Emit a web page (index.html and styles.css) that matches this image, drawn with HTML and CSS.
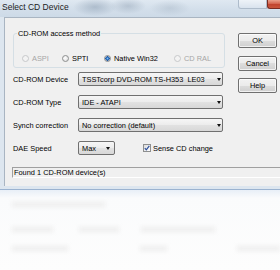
FILE: index.html
```html
<!DOCTYPE html>
<html>
<head>
<meta charset="utf-8">
<link rel="stylesheet" href="styles.css">
</head>
<body>
<div class="window">
  <div class="titlebar">
    <span class="title">Select CD Device</span>
    <span class="tb-minmax"></span>
    <span class="tb-close"></span>
  </div>
  <div class="frame">
    <div class="client">
      <div class="main">
        <fieldset class="group">
          <legend>CD-ROM access method</legend>
          <div class="radios">
            <label class="radio disabled r-aspi"><span class="dot"></span>ASPI</label>
            <label class="radio r-spti"><span class="dot"></span>SPTI</label>
            <label class="radio checked r-native"><span class="dot"></span>Native Win32</label>
            <label class="radio disabled r-ral"><span class="dot"></span>CD RAL</label>
          </div>
        </fieldset>
        <div class="row first">
          <span class="lbl">CD-ROM Device</span>
          <div class="combo"><span class="val">TSSTcorp DVD-ROM TS-H353&nbsp;&nbsp;LE03</span><i class="arrow"></i></div>
        </div>
        <div class="row">
          <span class="lbl">CD-ROM Type</span>
          <div class="combo"><span class="val">IDE - ATAPI</span><i class="arrow"></i></div>
        </div>
        <div class="row">
          <span class="lbl">Synch correction</span>
          <div class="combo"><span class="val">No correction (default)</span><i class="arrow"></i></div>
        </div>
        <div class="row">
          <span class="lbl">DAE Speed</span>
          <div class="combo narrow"><span class="val">Max</span><i class="arrow"></i></div>
          <label class="check">
            <span class="box"><svg width="6" height="6" viewBox="0 0 6 6"><path d="M0.8 3.1 L2.3 4.8 L5.3 0.9" fill="none" stroke="#2b4f9c" stroke-width="1.2"/></svg></span>
            Sense CD change
          </label>
        </div>
      </div>
      <div class="buttons">
        <div class="btn">OK</div>
        <div class="btn">Cancel</div>
        <div class="btn">Help</div>
      </div>
      <div class="status">Found 1 CD-ROM device(s)</div>
    </div>
  </div>
  <div class="frame-line"></div>
</div>
<div class="page">
  <div class="ghost-row one">
    <span class="ghost g1"></span>
  </div>
  <div class="ghost-row two">
    <span class="ghost g2"></span>
    <span class="ghost g3"></span>
    <span class="ghost g4"></span>
  </div>
  <div class="ghost-row three">
    <span class="ghost g5"></span>
    <span class="ghost g6"></span>
    <span class="ghost g7"></span>
  </div>
</div>
</body>
</html>
```
FILE: styles.css
```css
* { box-sizing: border-box; }
html, body { margin: 0; padding: 0; }
body {
  width: 280px;
  height: 270px;
  overflow: hidden;
  background: #fafbfc;
  font-family: "Liberation Sans", Arial, sans-serif;
  font-size: 7.4px;
  color: #000;
}

.window { width: 280px; }

.titlebar {
  height: 17px;
  display: flex;
  align-items: flex-start;
  padding: 2px 0 0 2px;
  background:
    radial-gradient(ellipse 22px 9px at 95px 7px, rgba(140,158,178,0.55), transparent),
    radial-gradient(ellipse 18px 8px at 128px 6px, rgba(150,166,184,0.5), transparent),
    radial-gradient(ellipse 20px 8px at 170px 8px, rgba(160,176,192,0.4), transparent),
    linear-gradient(to bottom, #dfe8f1 0%, #d2deea 60%, #cddae7 100%);
}
.title {
  flex: 1;
  font-size: 8.5px;
  line-height: 10px;
  color: #1c1c1c;
}
.tb-minmax {
  width: 29px;
  height: 9px;
  margin-top: -2px;
  background: linear-gradient(#eef3f8, #d9e3ee);
  border: 1px solid #aebccb;
  border-top: 0;
  border-radius: 0 0 0 3px;
}
.tb-close {
  width: 13px;
  height: 9px;
  margin-top: -2px;
  background: linear-gradient(#e9a08b, #d2604a 50%, #c1432d 51%, #c8553c);
  border: 1px solid #7a2c22;
  border-top: 0;
  border-right: 0;
  border-radius: 0 0 0 3px;
}

.frame {
  background: #dde6ef;
  padding: 0 0 3px 4px;
}
.client {
  background: #f0f0f0;
  border-top: 1px solid #a9b5c2;
  border-left: 1px solid #a9b5c2;
  display: grid;
  grid-template-columns: 212px 39px;
  column-gap: 13px;
  padding: 11px 0 8px 8px;
}

.main { display: flex; flex-direction: column; }

.group {
  margin: 0;
  padding: 16px 0 4px 8px;
  border: 1px solid #d5dfe5;
  border-radius: 3px;
  min-width: 0;
}
.group legend {
  padding: 0 1px;
  margin-left: -5px;
  line-height: 9px;
  font-size: 7.4px;
}

.radios {
  display: flex;
  align-items: center;
  height: 9px;
}
.radio {
  display: flex;
  align-items: center;
  gap: 3px;
  line-height: 9px;
  white-space: nowrap;
}
.r-aspi { width: 40px; }
.r-spti { width: 42px; }
.r-native { width: 70px; }
.dot {
  width: 7px;
  height: 7px;
  border-radius: 50%;
  border: 1px solid #8e8f8f;
  background: radial-gradient(circle at 40% 40%, #ffffff, #d6d7d8);
}
.disabled { color: #a6a6a6; }
.disabled .dot {
  border-color: #c6c8ca;
  background: #f3f3f3;
}
.checked .dot {
  background:
    radial-gradient(circle, #7fc0f2 0, #2c6fbf 1.3px, #1d58a6 2px, transparent 2.4px),
    radial-gradient(circle at 40% 40%, #ffffff, #d6d7d8);
}

.row {
  display: flex;
  align-items: center;
  height: 14px;
  margin-top: 9px;
  white-space: nowrap;
}
.row.first { margin-top: 4px; }
.lbl { width: 65px; }
.combo {
  width: 145px;
  height: 14px;
  display: flex;
  align-items: center;
  padding: 0 1.5px 0 3px;
  border: 1px solid #707070;
  border-radius: 2px;
  background: linear-gradient(#f6f6f6, #ececec 50%, #e2e2e2 50%, #d8d8d8);
}
.combo.narrow {
  width: 37px;
  padding-right: 4px;
}
.val {
  flex: 1;
  overflow: hidden;
  white-space: nowrap;
}
.arrow {
  width: 0;
  height: 0;
  border-left: 2.5px solid transparent;
  border-right: 2.5px solid transparent;
  border-top: 3px solid #111;
}

.check {
  display: flex;
  align-items: center;
  gap: 2px;
  margin-left: 28px;
}
.box {
  width: 8px;
  height: 8px;
  border: 1px solid #8e8f8f;
  background: linear-gradient(135deg, #dcdcdc, #ffffff);
  display: flex;
  align-items: center;
  justify-content: center;
}

.buttons {
  display: flex;
  flex-direction: column;
  gap: 7.5px;
  padding-top: 4px;
}
.btn {
  height: 15px;
  display: flex;
  align-items: center;
  justify-content: center;
  border: 1px solid #707070;
  border-radius: 2px;
  background: linear-gradient(#f2f2f2, #ebebeb 50%, #dddddd 50%, #cfcfcf);
  box-shadow: inset 0 0 0 1px rgba(255,255,255,0.7);
}

.status {
  grid-column: 1 / -1;
  margin: 12px -10px 0 -1px;
  height: 11px;
  line-height: 9px;
  padding-left: 1px;
  border-top: 1px solid #a0a0a0;
  border-left: 1px solid #a0a0a0;
  border-bottom: 1px solid #ffffff;
  white-space: nowrap;
}

.frame-line {
  height: 1px;
  background: #9bb3d0;
}

.page {
  height: 80px;
  padding: 12px 0 0 12px;
  background: linear-gradient(#e8eff7 0, #fafbfc 8px, #fdfdfd);
}
.ghost-row { display: flex; }
.ghost {
  display: block;
  height: 5px;
  background: #eeeeee;
  filter: blur(2px);
}
.ghost-row.two { margin-top: 20px; }
.ghost-row.three { margin-top: 14px; }
.g1 { width: 93px; }
.g2 { width: 41px; }
.g3 { width: 40px; margin-left: 26px; }
.g4 { width: 74px; margin-left: 22px; }
.g5 { width: 56px; }
.g6 { width: 28px; margin-left: 72px; }
.g7 { width: 43px; margin-left: 70px; }
```
